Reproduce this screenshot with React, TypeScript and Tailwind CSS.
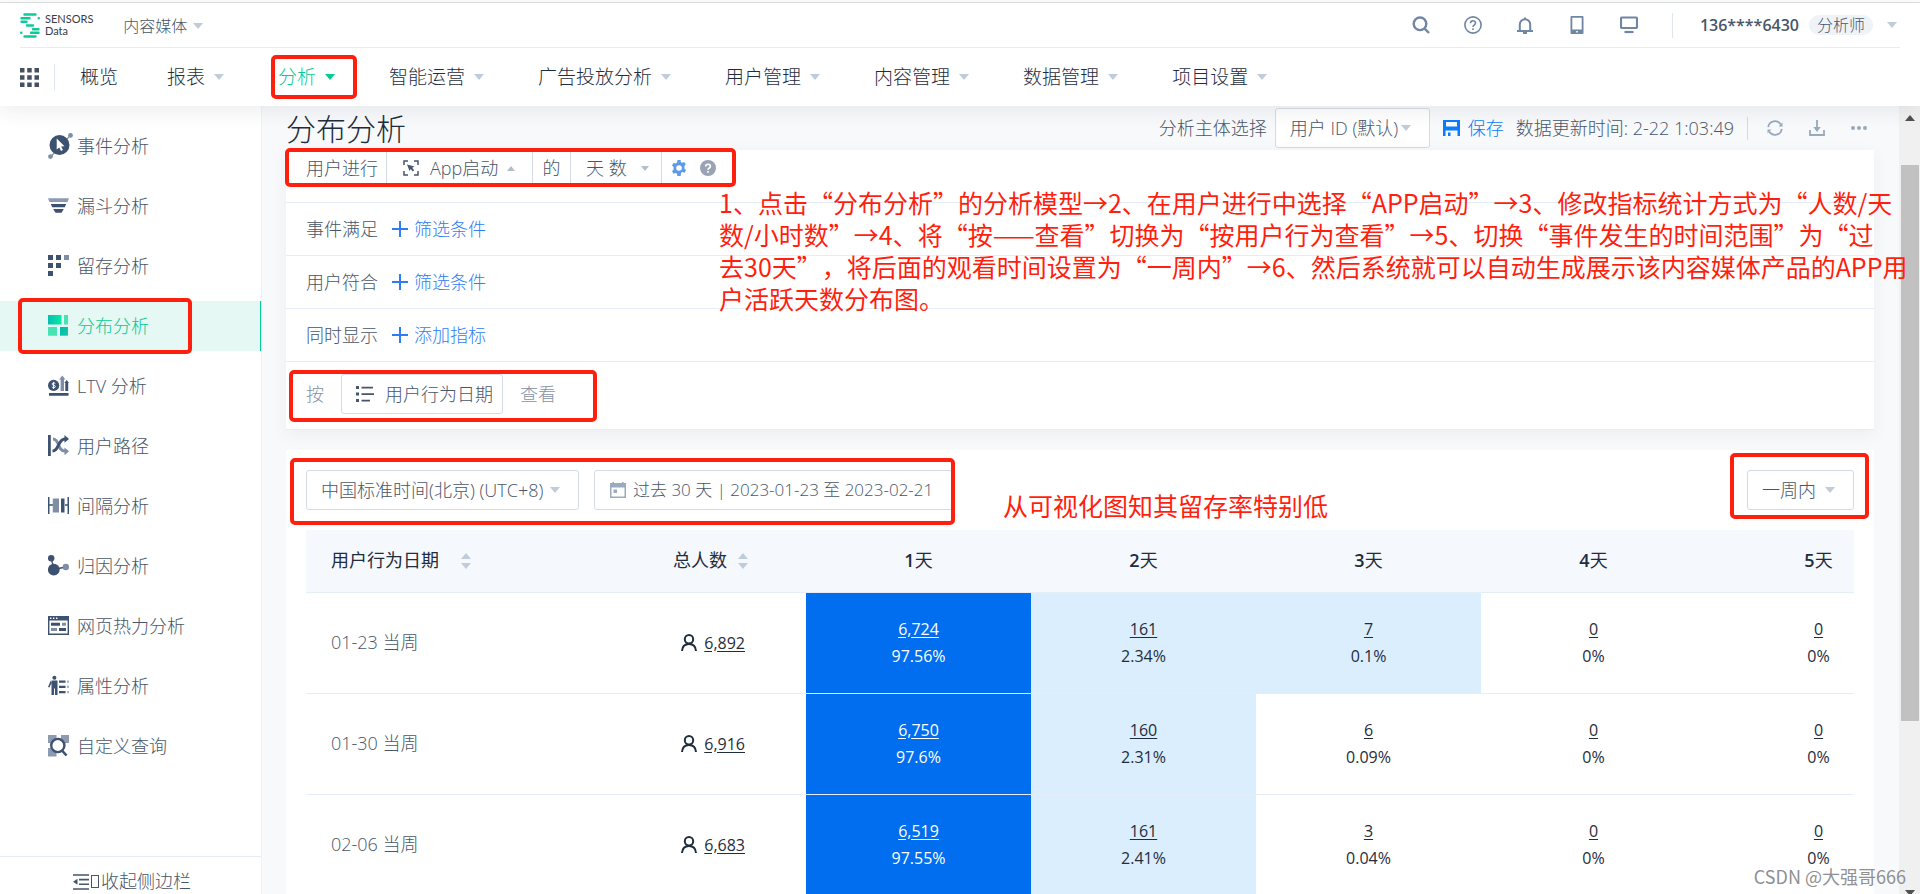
import type { ReactNode } from "react";

const DARK = "#3d5170";
const LIGHT = "#7f8da5";

function Caret({ className = "text-[#c0ccda]", up = false, small = false }: { className?: string; up?: boolean; small?: boolean }) {
  return (
    <svg viewBox="0 0 10 6" className={`shrink-0 fill-current ${small ? "h-[5px] w-[8px]" : "h-[6px] w-[10px]"} ${className}`} aria-hidden>
      <path d={up ? "M0 6h10L5 0z" : "M0 0h10L5 6z"} />
    </svg>
  );
}

/** Red outline drawn over the part of the page it is placed in. */
function Mark({ className }: { className: string }) {
  return <span aria-hidden className={`pointer-events-none absolute z-20 rounded-[5px] border-4 border-[#ff1f0f] ${className}`} />;
}

function SideIcon({ children }: { children: ReactNode }) {
  return (
    <svg viewBox="0 0 26 26" className="h-[26px] w-[26px] shrink-0" fill={DARK} aria-hidden>
      {children}
    </svg>
  );
}

const sideItems: { label: string; active?: boolean; icon: ReactNode }[] = [
  {
    label: "事件分析",
    icon: (
      <>
        <path d="M2.5 24 22.5 2.2" stroke={LIGHT} strokeWidth="1.2" />
        <circle cx="22.5" cy="2.4" r="2.4" fill={LIGHT} />
        <circle cx="2.5" cy="23.6" r="2.4" fill={LIGHT} />
        <circle cx="11.5" cy="12" r="10" />
        <path d="M8.7 5.6v11l2.6-2.2 1.7 3.6 1.9-.9-1.7-3.5 3.3-.4z" fill="#fff" />
      </>
    ),
  },
  {
    label: "漏斗分析",
    icon: (
      <>
        <path d="M0 5.3h21L19.5 9h-18z" fill="#8e9ab0" />
        <path d="M2.8 11h15.4l-1.4 3.3H4.2zM5.2 16h10.6l-2.3 3.7h-6z" />
      </>
    ),
  },
  {
    label: "留存分析",
    icon: (
      <>
        <path d="M0 2h5v5H0zM8 2h5v5H8zM0 10h5v5H0zM8 10h5v5H8zM0 18h5v5H0z" />
        <path d="M16 2h5v5h-5z" fill={LIGHT} />
      </>
    ),
  },
  {
    label: "分布分析",
    active: true,
    icon: (
      <>
        <defs>
          <linearGradient id="tileA" x1="0" x2="1">
            <stop offset="0" stopColor="#04bfae" />
            <stop offset="1" stopColor="#08e9a6" />
          </linearGradient>
          <linearGradient id="tileB" x1="0" x2="1" y1="0" y2="1">
            <stop offset="0" stopColor="#04b5b0" />
            <stop offset="1" stopColor="#0fd0a4" />
          </linearGradient>
        </defs>
        <path d="M0 2h13.5v9.5H0z" fill="url(#tileA)" />
        <path d="M16 2h4v9.5h-4zM0 14h9v8.7H0z" fill="#46e3b4" />
        <path d="M12 14h8v8.7h-8z" fill="url(#tileB)" />
      </>
    ),
  },
  {
    label: "LTV 分析",
    icon: (
      <>
        <circle cx="5.6" cy="12.4" r="5.6" />
        <path d="M7.4 10.6c-.4-.8-3.4-1-3.4.4 0 1.6 3.4.8 3.4 2.6 0 1.4-3 1.3-3.6.3M5.6 8.8v7.2" fill="none" stroke="#fff" />
        <path d="M12.6 18V6.5h-1.4l3.1-4 3.1 4H16V18z" fill={LIGHT} />
        <path d="M17.3 18v-8h-1l2.4-3 2.3 3h-.8v8zM1 20h19.5v2.8H1z" />
      </>
    ),
  },
  {
    label: "用户路径",
    icon: (
      <>
        <path d="M0 2h2.8v21H0z" />
        <path d="M5 6c7 0 4 12 12 12" fill="none" stroke={LIGHT} strokeWidth="2.8" />
        <path d="M16.5 14.4 21 18.2l-4.5 4z" fill={LIGHT} />
        <path d="M4.5 18c7 0 5-12 12.5-12" fill="none" stroke={DARK} strokeWidth="3" />
        <path d="M16.5 2 21 6l-4.5 3.8z" />
      </>
    ),
  },
  {
    label: "间隔分析",
    icon: (
      <>
        <path d="M0 4h1.5v7.3H5v1.5H1.5V21H0zM21 4h-1.5v7.3H16v1.5h3.5V21H21zM13 5.5h3.5v14H13z" />
        <path d="M4.8 5.5H11v14H4.8z" fill={LIGHT} />
      </>
    ),
  },
  {
    label: "归因分析",
    icon: (
      <>
        <path d="m3 5 2.5 9M5.7 16.5l12-2.5" stroke={DARK} strokeWidth="1.3" />
        <circle cx="3.2" cy="5.3" r="3.2" />
        <circle cx="5.8" cy="16.7" r="5.9" />
        <circle cx="17.8" cy="14" r="3.2" fill={LIGHT} />
      </>
    ),
  },
  {
    label: "网页热力分析",
    icon: (
      <>
        <path fillRule="evenodd" d="M0 3h21v19H0zm1.4 4.6v13h18.2v-13zM3 9.8h9v3H3zM11 15h7v3h-7z" />
        <path d="M14 9.8h4v3h-4zM3 15h6v3H3z" fill={LIGHT} />
        <path d="M2 4.6h1.4V6H2zM5 4.6h1.4V6H5zM8 4.6h1.4V6H8z" fill="#fff" />
      </>
    ),
  },
  {
    label: "属性分析",
    icon: (
      <>
        <circle cx="6.4" cy="4.7" r="2" />
        <path d="M3.5 7.5h6V22H7v-6.5H6V22H3.5zM2.8 7.5 0 14l1.4.6L3.5 10zM11 7.5h6.5v2.2H11zM11 12.7h6.5v2.2H11zM11 18h6.5v2.2H11z" />
        <path d="M19 7.5h2v2.2h-2zM19 12.7h2v2.2h-2zM19 18h2v2.2h-2z" fill="#a9b4c5" />
      </>
    ),
  },
  {
    label: "自定义查询",
    icon: (
      <>
        <path d="M0 2h8.5v8H0zM13 2h8v8h-8zM0 15h8.5v8.5H0z" fill="#8e9ab0" />
        <circle cx="9.8" cy="12.5" r="6.6" fill="#fff" stroke={DARK} strokeWidth="2.4" />
        <path d="m14 17.5 4.5 5" stroke={DARK} strokeWidth="2.6" />
      </>
    ),
  },
];

const navItems = ["报表", "分析", "智能运营", "广告投放分析", "用户管理", "内容管理", "数据管理", "项目设置"];

const dayColumns = ["1天", "2天", "3天", "4天", "5天"];

const rows = [
  {
    date: "01-23 当周",
    total: "6,892",
    days: [["6,724", "97.56%"], ["161", "2.34%"], ["7", "0.1%"], ["0", "0%"], ["0", "0%"]],
    shaded: 3,
  },
  {
    date: "01-30 当周",
    total: "6,916",
    days: [["6,750", "97.6%"], ["160", "2.31%"], ["6", "0.09%"], ["0", "0%"], ["0", "0%"]],
    shaded: 2,
  },
  {
    date: "02-06 当周",
    total: "6,683",
    days: [["6,519", "97.55%"], ["161", "2.41%"], ["3", "0.04%"], ["0", "0%"], ["0", "0%"]],
    shaded: 2,
  },
];

function Logo() {
  return (
    <a href="#home" className="flex items-center gap-[5px]">
      <svg viewBox="0 0 20 25" className="h-[25px] w-5" fill="none" stroke="#0ccb98" strokeWidth="2.4" strokeLinecap="round" aria-hidden>
        <path d="M4.5 1.5h11M1.5 5.2h8M18.7 5.2h.1M1.5 8.8h5M7 12.5h6M13 16.2h5.5M11 19.8h7.5M1.2 19.8h.1M4.5 23.5h11" />
      </svg>
      <span className="flex flex-col text-[11px] leading-[12px] font-normal text-[#3a3a4c] font-['Lato',sans-serif]">
        <span>SENSORS</span>
        <span>Data</span>
      </span>
    </a>
  );
}

function TopBar() {
  return (
    <div className="mx-5 flex h-[45px] items-center border-b border-[#e6ebf5]">
      <Logo />
      <button className="ml-[30px] flex items-center gap-[6px] pt-[2px] text-[16px] text-[#475669]">
        内容媒体
        <Caret />
      </button>
      <div className="ml-auto flex items-center text-[#6f86a5]">
        <div className="flex items-center gap-[34px]">
          <button aria-label="搜索">
            <svg viewBox="0 0 18 18" className="size-[18px]" fill="none" stroke="currentColor" strokeWidth="2.4">
              <circle cx="8" cy="7.8" r="6.3" />
              <path d="m12.5 12.5 4.5 4.5" />
            </svg>
          </button>
          <button aria-label="帮助">
            <svg viewBox="0 0 18 18" className="size-[18px]" fill="none" stroke="currentColor" strokeWidth="1.6">
              <circle cx="9" cy="9" r="8.1" />
              <path d="M6.5 7.3c0-3.5 5-3.3 5-.3 0 1.8-2.5 1.8-2.5 4M9 12.3v1.6" />
            </svg>
          </button>
          <button aria-label="通知">
            <svg viewBox="0 0 18 18" className="size-[18px]" fill="none" stroke="currentColor" strokeWidth="2">
              <path d="M1 15h16M3.8 15V8.5a5.2 5.2 0 0 1 10.4 0V15M9 3.3V1.6M7 17h4" />
            </svg>
          </button>
          <button aria-label="手机">
            <svg viewBox="0 0 18 18" className="size-[18px]" fill="currentColor">
              <path fillRule="evenodd" d="M3.5 0h11q1 0 1 1v16q0 1-1 1h-11q-1 0-1-1V1q0-1 1-1zm.8 1.8v11.8h9.4V1.8zM8.2 15v1.6h1.6V15z" />
            </svg>
          </button>
          <button aria-label="屏幕">
            <svg viewBox="0 0 18 18" className="size-[18px]" fill="none" stroke="currentColor" strokeWidth="2.2">
              <rect x="1" y="1.5" width="16" height="10.5" rx="1" />
              <path d="M4.5 16h9" />
            </svg>
          </button>
        </div>
        <span className="mr-[27px] ml-[34px] h-[25px] w-px bg-[#e0e6ed]" />
        <span className="text-[16px] font-semibold text-[#475669]">136****6430</span>
        <span className="ml-[10px] rounded-full bg-[#eff2f7] px-[8px] text-[16px] leading-[20px] text-[#475669]">分析师</span>
        <button className="mr-[3px] ml-[14px]" aria-label="账号菜单">
          <Caret />
        </button>
      </div>
    </div>
  );
}

function NavBar() {
  return (
    <nav className="flex h-[58px] items-center px-5 text-[19px] text-[#1f2d3d]">
      <button aria-label="全部应用">
        <svg viewBox="0 0 19 19" className="size-[19px]" fill="#475063">
          <path d="M0 0h4.5v4.5H0zM7.2 0h4.5v4.5H7.2zM14.5 0H19v4.5h-4.5zM0 7.2h4.5v4.5H0zM7.2 7.2h4.5v4.5H7.2zM14.5 7.2H19v4.5h-4.5zM0 14.5h4.5V19H0zM7.2 14.5h4.5V19H7.2zM14.5 14.5H19V19h-4.5z" />
        </svg>
      </button>
      <span className="ml-[15px] h-[26px] w-px bg-[#e0e6ed]" />
      <a href="#overview" className="mr-[49px] ml-[25px]">
        概览
      </a>
      <div className="flex items-center gap-[54px]">
        {navItems.map((item) => {
          const active = item === "分析";
          return (
            <a key={item} href={`#${item}`} className={`relative flex items-center gap-[9px] ${active ? "text-[#04cb94]" : ""}`}>
              {item}
              <Caret className={active ? "text-[#04cb94]" : "text-[#c0ccda]"} />
              {active && <Mark className="-inset-y-[8px] -right-[22px] -left-[7px]" />}
            </a>
          );
        })}
      </div>
    </nav>
  );
}

function Sidebar() {
  return (
    <aside className="flex w-[262px] shrink-0 flex-col border-r border-[#eff2f7] bg-white text-[18px] text-[#475669]">
      <ul className="flex flex-1 flex-col gap-[10px] pt-[15px]">
        {sideItems.map((item) => (
          <li key={item.label}>
            <a
              href={`#${item.label}`}
              className={`relative flex h-[50px] items-center gap-[3px] pl-[48px] ${
                item.active ? "border-r border-[#04cb94] bg-[#e5f8f3] text-[#04cb94]" : ""
              }`}
            >
              <SideIcon>{item.icon}</SideIcon>
              {item.label}
              {item.active && <Mark className="-inset-y-[3px] left-[18px] w-[174px]" />}
            </a>
          </li>
        ))}
      </ul>
      <button className="flex h-[38px] shrink-0 items-center border-t border-[#e5eef8] pt-[12px] pl-[73px]">
        <svg viewBox="0 0 16 16" className="size-4" fill="none" stroke="#475669" strokeWidth="1.6" aria-hidden>
          <path d="M0 1h16M6 5.6h10M6 10.3h10M0 15h16" />
          <path d="M4.5 4.8v6L0 7.8z" fill="#475669" stroke="none" />
        </svg>
        <span aria-hidden className="mx-[2px] h-[13px] w-[8px] border border-[#475669]" />
        收起侧边栏
      </button>
    </aside>
  );
}

function Dropdown({ label, value, className }: { label: string; value: string; className: string }) {
  return (
    <span className={`relative flex h-[40px] items-center rounded-[3px] border border-[#d3dce6] bg-white ${className}`}>
      <select aria-label={label} className="h-full w-full appearance-none bg-transparent pl-[14px] outline-none">
        <option>{value}</option>
      </select>
      <Caret className="pointer-events-none absolute right-[18px] text-[#c0ccda]" />
    </span>
  );
}

function TitleRow() {
  return (
    <div className="flex h-[44px] items-center">
      <h1 className="text-[30px] text-[#1f2d3d]">分布分析</h1>
      <div className="ml-auto flex items-center">
        <span>分析主体选择</span>
        <Dropdown label="分析主体选择" value="用户 ID (默认)" className="ml-[8px] w-[155px]" />
        <button className="ml-[13px] flex items-center gap-[8px] text-[#0a7cff]">
          <svg viewBox="0 0 17 16" className="h-4 w-[17px]" fill="currentColor" aria-hidden>
            <path fillRule="evenodd" d="M0 0h17v16h-2.5v-5.5h-12V16H0zm3 2v4.5h11V2z" />
            <path d="M5 12.5h2.5V16H5z" />
          </svg>
          保存
        </button>
        <span className="ml-[12px]">数据更新时间: 2-22 1:03:49</span>
        <span className="ml-[13px] h-[23px] w-px bg-[#d3dce6]" />
        <div className="mr-[7px] ml-[19px] flex items-center gap-[26px] text-[#99a9bf]">
          <button aria-label="刷新">
            <svg viewBox="0 0 16 16" className="size-4" fill="none" stroke="currentColor" strokeWidth="1.7">
              <path d="M1.2 7.2a6.8 6.8 0 0 1 12.6-2.7M14.8 8.8A6.8 6.8 0 0 1 2.2 11.5" />
              <path d="M15.500 2.500v4h-4zM.5 13.500v-4h4z" fill="currentColor" stroke="none" />
            </svg>
          </button>
          <button aria-label="下载">
            <svg viewBox="0 0 16 16" className="size-4" fill="none" stroke="currentColor" strokeWidth="1.8">
              <path d="M1 10v5h14v-5M8 0v9" />
              <path d="M4.3 7h7.4L8 12z" fill="currentColor" stroke="none" />
            </svg>
          </button>
          <button aria-label="更多">
            <svg viewBox="0 0 16 16" className="size-4" fill="currentColor">
              <circle cx="2" cy="8" r="2" />
              <circle cx="8" cy="8" r="2" />
              <circle cx="14" cy="8" r="2" />
            </svg>
          </button>
        </div>
      </div>
    </div>
  );
}

function FilterRow({ label, action }: { label: string; action: string }) {
  return (
    <div className="flex h-[53px] items-center border-t border-[#e5eef8] px-5">
      <span>{label}</span>
      <button className="ml-[14px] flex items-center gap-[6px] text-[#2f7df6]">
        <svg viewBox="0 0 16 16" className="size-4" stroke="currentColor" strokeWidth="2" aria-hidden>
          <path d="M0 8h16M8 0v16" />
        </svg>
        {action}
      </button>
    </div>
  );
}

function QueryCard() {
  return (
    <section className="relative bg-white shadow-[0_4px_16px_rgba(31,45,61,0.06)]">
      <div className="flex h-[52px] items-start">
        <div className="relative flex h-[36px] items-stretch pl-5">
          <span className="flex w-[80px] items-center">用户进行</span>
          <button className="flex w-[146px] items-center border-l border-[#d3dce6] pl-4">
            <svg viewBox="0 0 16 16" className="size-4" fill="none" stroke="#475669" strokeWidth="1.5" aria-hidden>
              <path d="M5 1H1v4M11 1h4v4M5 15H1v-4M11 15h4v-4" />
              <path d="m4 4.5 7.5 2-2.3 1.3 2 2.4-1.5 1.3-2-2.4L6.5 11z" fill="#475669" stroke="none" />
            </svg>
            <span className="ml-[11px]">App启动</span>
            <Caret up small className="ml-[9px] text-[#b3becd]" />
          </button>
          <span className="flex w-[38px] items-center justify-center border-l border-[#d3dce6]">的</span>
          <button className="flex w-[92px] items-center justify-between border-x border-[#d3dce6] pr-[12px] pl-[15px]">
            天 数
            <Caret small className="text-[#b3becd]" />
          </button>
          <div className="flex items-center gap-[13px] pl-[9px]">
            <button aria-label="设置">
              <svg viewBox="0 0 16 16" className="size-4" fill="#5c9bea">
                <path
                  fillRule="evenodd"
                  d="M6.5 0h3l.4 2.2 1.2.6 2-.9 1.7 2.4-1.4 1.7.1 1.3-.1 1.4 1.7 1.3-1.5 2.7-2.2-.8-1.3.8L9.6 16H6.4L6 13.7l-1.3-.8-2.2.8L1 11l1.6-1.3-.1-1.4.1-1.4L1 5.5l1.5-2.6 2.2.7 1.3-.8zM8 5.2a2.8 2.8 0 1 0 0 5.6 2.8 2.8 0 0 0 0-5.6z"
                />
              </svg>
            </button>
            <button aria-label="说明">
              <svg viewBox="0 0 16 16" className="size-4" fill="#99a3b4">
                <circle cx="8" cy="8" r="8" />
                <path d="M5.7 6.5c0-3 4.7-2.9 4.7-.2C10.4 8 8 7.9 8 9.8M8 11v1.7" fill="none" stroke="#fff" strokeWidth="1.7" />
              </svg>
            </button>
          </div>
          <Mark className="-top-[2px] -right-[20px] -bottom-[1px] -left-[1px]" />
        </div>
      </div>
      <FilterRow label="事件满足" action="筛选条件" />
      <FilterRow label="用户符合" action="筛选条件" />
      <FilterRow label="同时显示" action="添加指标" />
      <div className="flex h-[69px] items-start border-y border-[#e5eef8] pt-[12px] pl-5">
        <div className="relative flex items-center">
          <span className="w-[35px] text-[#8492a6]">按</span>
          <button className="flex h-[40px] items-center gap-[11px] rounded-[3px] border border-[#d3dce6] pr-[9px] pl-[14px]">
            <svg viewBox="0 0 18 16" className="h-4 w-[18px]" fill="#475669" aria-hidden>
              <path d="M0 0h3v3H0zM0 6.5h3v3H0zM0 13h3v3H0zM5.5.8H17v1.7H5.5zM5.5 7.2H18v1.7H5.5zM5.5 13.7H14v1.7H5.5z" />
            </svg>
            用户行为日期
          </button>
          <span className="ml-[17px] text-[#8492a6]">查看</span>
          <Mark className="-top-[4px] -right-[41px] -bottom-[8px] -left-[17px]" />
        </div>
      </div>

      {/* Step-by-step note written over the filters */}
      <p className="absolute top-[36px] left-[433px] z-30 text-[25px] leading-[32px] font-normal whitespace-nowrap text-[#ff1f0f] [text-spacing-trim:space-all] font-['Noto_Sans_CJK_SC',sans-serif]">
        1、点击“分布分析”的分析模型→2、在用户进行中选择“APP启动”→3、修改指标统计方式为“人数/天
        <br />
        数/小时数”→4、将“按——查看”切换为“按用户行为查看”→5、切换“事件发生的时间范围”为“过
        <br />
        去30天”，将后面的观看时间设置为“一周内”→6、然后系统就可以自动生成展示该内容媒体产品的APP用
        <br />
        户活跃天数分布图。
      </p>
    </section>
  );
}

function SortIcon() {
  return (
    <svg viewBox="0 0 10 16" className="h-4 w-[10px]" fill="#c0ccda" aria-hidden>
      <path d="M0 6h10L5 0zM0 10h10l-5 6z" />
    </svg>
  );
}

function ResultCard() {
  return (
    <section className="mt-[20px] flex-1 bg-white px-5 pt-[20px]">
      <div className="flex h-[40px] items-start">
        <div className="relative flex items-center gap-[15px]">
          <Dropdown label="时区" value="中国标准时间(北京) (UTC+8)" className="w-[273px]" />
          <button className="flex h-[40px] w-[359px] items-center gap-[7px] rounded-[3px] border border-[#d3dce6] pl-[15px] text-[17px]">
            <svg viewBox="0 0 16 16" className="size-4" fill="#99a9bf" aria-hidden>
              <path fillRule="evenodd" d="M0 1h2.5V0H4v1h8V0h1.5v1H16v15H0zm1.5 4.5v9h13v-9z" />
              <path d="M3.5 7.5H7V11H3.5z" />
            </svg>
            过去 30 天 | 2023-01-23 至 2023-02-21
          </button>
          <Mark className="-top-[12px] -right-[2px] -bottom-[15px] -left-[16px]" />
        </div>
        <p className="pt-[19px] pl-[50px] text-[25px] leading-[32px] font-normal text-[#ff1f0f] font-['Noto_Sans_CJK_SC',sans-serif]">
          从可视化图知其留存率特别低
        </p>
        <div className="relative ml-auto">
          <Dropdown label="时间窗口" value="一周内" className="w-[107px]" />
          <Mark className="-top-[17px] -right-[15px] -bottom-[9px] -left-[17px]" />
        </div>
      </div>

      <div className="mt-[20px] overflow-hidden">
        <table className="w-[1625px] table-fixed border-collapse text-[#1f2d3d]">
          <colgroup>
            <col className="w-[275px]" />
            <col className="w-[225px]" />
          </colgroup>
          <thead>
            <tr className="h-[62px] border-b border-[#e5eef8] bg-[#f5f8fd]">
              <th className="pl-[25px] text-left font-normal">
                <button className="flex items-center gap-[22px]">
                  用户行为日期
                  <SortIcon />
                </button>
              </th>
              <th className="pr-[58px] font-normal">
                <button className="ml-auto flex items-center gap-[11px]">
                  总人数
                  <SortIcon />
                </button>
              </th>
              {dayColumns.map((day) => (
                <th key={day} className="font-semibold">
                  {day[0]}
                  <span className="font-normal">天</span>
                </th>
              ))}
            </tr>
          </thead>
          <tbody>
            {rows.map((row) => (
              <tr key={row.date} className="h-[101px] border-b border-[#e5eef8]">
                <td className="pl-[25px] text-[#475669]">{row.date}</td>
                <td className="pr-[61px]">
                  <div className="flex items-center justify-end gap-[7px]">
                    <svg viewBox="0 0 16 17" className="h-[17px] w-4" fill="none" stroke="#1f2d3d" strokeWidth="2" aria-hidden>
                      <circle cx="8" cy="5.2" r="4.2" />
                      <path d="M1 17c.3-4.5 3-7 7-7s6.7 2.5 7 7" />
                    </svg>
                    <a href="#total" className="text-[16px] font-normal underline underline-offset-2">
                      {row.total}
                    </a>
                  </div>
                </td>
                {row.days.map(([count, rate], i) => (
                  <td
                    key={dayColumns[i]}
                    className={`text-center text-[16px] leading-[27px] font-normal ${
                      i === 0 ? "bg-[#006eef] text-white" : i < row.shaded ? "bg-[#dbeefe]" : ""
                    }`}
                  >
                    <a href="#users" className="underline underline-offset-2">
                      {count}
                    </a>
                    <div>{rate}</div>
                  </td>
                ))}
              </tr>
            ))}
          </tbody>
        </table>
      </div>
    </section>
  );
}

function ScrollRail() {
  return (
    <div aria-hidden className="flex w-[21px] shrink-0 flex-col items-center bg-[#f0f0f0] text-[#505050]">
      <Caret up className="mt-[9px] text-[#505050]" />
      <span className="mt-[44px] h-[556px] w-[18px] bg-[#c1c1c1]" />
      <Caret className="mt-auto -mb-[2px] text-[#505050]" />
    </div>
  );
}

export default function App() {
  return (
    <div className="relative flex h-screen flex-col overflow-hidden bg-white font-light font-['Open_Sans','Noto_Sans_CJK_SC',sans-serif]">
      <header className="relative z-10 mt-[2px] border-t border-[#d9dadc] bg-white shadow-[0_4px_20px_rgba(31,45,61,0.09)]">
        <TopBar />
        <NavBar />
      </header>
      <div className="flex min-h-0 flex-1">
        <Sidebar />
        <main className="flex min-w-0 flex-1 flex-col bg-[#f8f9fb] pr-[25px] pl-[24px] text-[18px] text-[#475669]">
          <TitleRow />
          <QueryCard />
          <ResultCard />
        </main>
        <ScrollRail />
      </div>
      <span className="absolute right-[14px] bottom-[4px] z-30 text-[18px] leading-[28px] font-normal text-[#8f9092] font-['Noto_Sans_CJK_SC',sans-serif]">
        CSDN @大强哥666
      </span>
    </div>
  );
}
